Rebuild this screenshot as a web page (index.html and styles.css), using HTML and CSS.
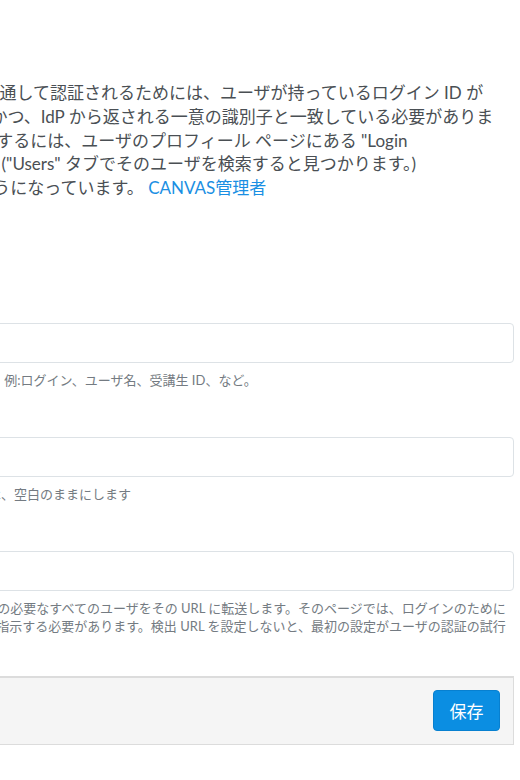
FILE: index.html
```html
<!DOCTYPE html>
<html lang="ja">
<head>
<meta charset="utf-8">
<title>SAML 認証</title>
<link rel="stylesheet" href="styles.css">
</head>
<body>
<div class="viewport">
  <div class="page">
    <p class="intro">このプロバイダを使用しユーザが IdPを通して認証されるためには、ユーザが持っているログイン ID が<br>Id で設定された属性と同じ値を持ち、かつ、IdP から返される一意の識別子と一致している必要がありま<br>す。ユーザのログイン ID を一覧で確認するには、ユーザのプロフィール ページにある "Login<br>Information" セクションを参照するか、("Users" タブでそのユーザを検索すると見つかります。)<br>現在は既定で そのように設定されるようになっています。 <a class="link" href="#">CANVAS管理者</a></p>

    <div class="field">
      <label class="label" for="f1">IdP のログイン属性</label>
      <div class="control">
        <input class="input" id="f1" type="text">
        <p class="help">識別用の属性名。 例:ログイン、ユーザ名、受講生 ID、など。</p>
      </div>
    </div>

    <div class="field">
      <label class="label" for="f2">ログアウト URL</label>
      <div class="control">
        <input class="input" id="f2" type="text">
        <p class="help">使用しない場合は、空白のままにします</p>
      </div>
    </div>

    <div class="field">
      <label class="label" for="f3">検出 URL</label>
      <div class="control">
        <input class="input" id="f3" type="text">
        <p class="help">Dると、ログインの必要なすべてのユーザをその URL に転送します。そのページでは、ログインのために<br>IdP 名をユーザに指示する必要があります。検出 URL を設定しないと、最初の設定がユーザの認証の試行</p>
      </div>
    </div>

    <div class="actions">
      <button class="btn" type="button">保存</button>
    </div>
  </div>
</div>
</body>
</html>
```

FILE: styles.css
```css
html, body {
  margin: 0;
  padding: 0;
  background: #ffffff;
}
body {
  overflow: hidden;
  font-family: Lato, "Noto Sans CJK JP", sans-serif;
  color: #4a4f54;
}
.viewport {
  width: 520px;
  height: 780px;
  overflow: hidden;
}
.page {
  margin-left: -300px;
  width: 814px;
  padding-top: 81px;
}
.intro {
  margin: 0 0 123px 0;
  font-size: 17px;
  line-height: 23.75px;
  white-space: nowrap;
  color: #4a4f54;
}
.link {
  color: #1a8fe3;
  text-decoration: none;
}
.field {
  display: grid;
  grid-template-columns: 177px 1fr;
  column-gap: 20px;
  margin-bottom: 48px;
}
.label {
  font-size: 16px;
  line-height: 40px;
  text-align: right;
  color: #4a4f54;
}
.control {
  min-width: 0;
}
.input {
  display: block;
  box-sizing: border-box;
  width: 100%;
  height: 40px;
  margin: 0;
  border: 1px solid #dde2e6;
  border-radius: 4px;
  background: #ffffff;
  font: inherit;
}
.help {
  margin: 8px 0 0 0;
  font-size: 13px;
  line-height: 18px;
  color: #747b82;
  white-space: nowrap;
}
.actions {
  display: flex;
  justify-content: flex-end;
  box-sizing: border-box;
  height: 69px;
  margin-top: -7px;
  padding: 0 13px;
  align-items: center;
  background: #f5f5f5;
  border: 1px solid #dcdcdc;
  border-top-width: 2px;
}
.btn {
  box-sizing: border-box;
  height: 41px;
  min-width: 67px;
  padding: 0 14px;
  background: #0b8ee2;
  border: 1px solid #0780d0;
  border-radius: 4px;
  color: #ffffff;
  font-family: Lato, "Noto Sans CJK JP", sans-serif;
  font-size: 17px;
}
```
